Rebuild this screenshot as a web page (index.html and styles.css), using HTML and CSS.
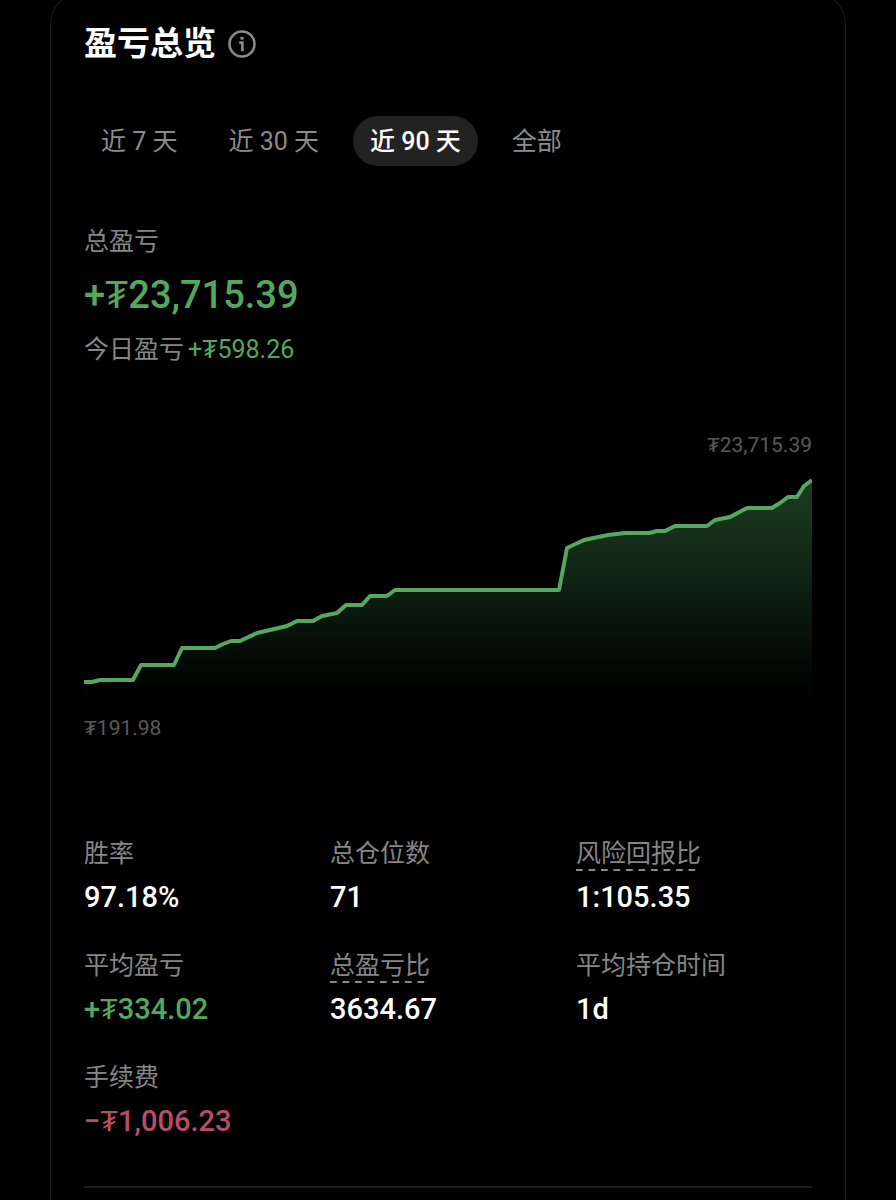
FILE: index.html
```html
<!DOCTYPE html>
<html lang="zh-CN">
<head>
  <meta charset="UTF-8">
  <meta name="viewport" content="width=device-width, initial-scale=1.0">
  <title>盈亏总览</title>
  <link rel="stylesheet" href="styles.css">
</head>
<body>
  <main class="card">
    <header class="card-header">
      <h1>盈亏总览</h1>
      <button class="info-btn" type="button" aria-label="说明">
        <svg viewBox="0 0 28 28" width="28" height="28" fill="none" stroke="currentColor">
          <circle cx="14" cy="14" r="12.5" stroke-width="2.6"/>
          <path d="M11.2 12.6h3.2v8.6" stroke-width="2.6"/>
          <circle cx="14" cy="8.2" r="1.7" fill="currentColor" stroke="none"/>
        </svg>
      </button>
    </header>

    <nav class="tabs">
      <button class="tab" type="button">近 7 天</button>
      <button class="tab" type="button">近 30 天</button>
      <button class="tab active" type="button">近 90 天</button>
      <button class="tab" type="button">全部</button>
    </nav>

    <section class="summary">
      <p class="label">总盈亏</p>
      <p class="total up">+₮23,715.39</p>
      <p class="today"><span class="label">今日盈亏</span> <span class="today-value up">+₮598.26</span></p>
    </section>

    <section class="chart">
      <p class="chart-label max">₮23,715.39</p>
      <svg class="chart-svg" viewBox="0 0 728 230" role="img" aria-label="近 90 天盈亏">
        <defs>
          <linearGradient id="area" x1="0" y1="10" x2="0" y2="228" gradientUnits="userSpaceOnUse">
            <stop offset="0" stop-color="#1d3d21"/>
            <stop offset="0.4" stop-color="#112615"/>
            <stop offset="0.7" stop-color="#07120a"/>
            <stop offset="1" stop-color="#000"/>
          </linearGradient>
        </defs>
        <path fill="url(#area)" d="M0 212H8L16 210H49L57 195H90L98 178H131L139 174L147 171H156L173 163L186 160L203 156L213 151H229L238 146L253 143L262 135H278L286 126H303L311 120H475L483 78L500 70L524 65L541 63H565L573 61H581L591 56H623L631 50L646 47L663 38H688L696 33L704 27H713L720 16L728 10V230H0Z"/>
        <path class="line" d="M0 212H8L16 210H49L57 195H90L98 178H131L139 174L147 171H156L173 163L186 160L203 156L213 151H229L238 146L253 143L262 135H278L286 126H303L311 120H475L483 78L500 70L524 65L541 63H565L573 61H581L591 56H623L631 50L646 47L663 38H688L696 33L704 27H713L720 16L728 10"/>
      </svg>
      <p class="chart-label">₮191.98</p>
    </section>

    <dl class="stats">
      <div class="stat">
        <dt class="label">胜率</dt>
        <dd>97.18%</dd>
      </div>
      <div class="stat">
        <dt class="label">总仓位数</dt>
        <dd>71</dd>
      </div>
      <div class="stat">
        <dt class="label hint">风险回报比</dt>
        <dd>1:105.35</dd>
      </div>
      <div class="stat">
        <dt class="label">平均盈亏</dt>
        <dd class="up">+₮334.02</dd>
      </div>
      <div class="stat">
        <dt class="label hint">总盈亏比</dt>
        <dd>3634.67</dd>
      </div>
      <div class="stat">
        <dt class="label">平均持仓时间</dt>
        <dd>1d</dd>
      </div>
      <div class="stat">
        <dt class="label">手续费</dt>
        <dd class="down">−₮1,006.23</dd>
      </div>
    </dl>

    <hr class="divider">
  </main>
</body>
</html>
```

FILE: styles.css
```css
* {
  margin: 0;
  padding: 0;
  box-sizing: border-box;
}

body {
  font-family: Roboto, "Noto Sans CJK SC", sans-serif;
  background: #000;
  color: #fff;
  padding: 0 50px;
}

.card {
  margin-top: -8px;
  padding: 26px 33px 11px;
  border: 1px solid #1c1c1c;
  border-bottom: 0;
  border-radius: 32px 32px 0 0;
}

.card-header {
  display: flex;
  align-items: center;
  gap: 12px;
}

h1 {
  font-size: 33px;
  font-weight: 700;
  line-height: 50px;
}

.info-btn {
  display: flex;
  background: none;
  border: 0;
  color: #8a8a8a;
}

.tabs {
  display: flex;
  gap: 17px;
  margin-top: 47px;
}

.tab {
  height: 50px;
  padding: 2px 17px 0;
  border: 0;
  border-radius: 25px;
  background: none;
  color: #8c8c8c;
  font-family: inherit;
  font-size: 25px;
  line-height: 48px;
}

.tab.active {
  background: #222;
  color: #fff;
  font-weight: 500;
}

.label {
  font-size: 25px;
  line-height: 34px;
  color: #868686;
}

.up {
  color: #54a85e;
}

.down {
  color: #b94d69;
}

.summary {
  margin-top: 59px;
}

.total {
  margin-top: 11px;
  font-size: 38px;
  font-weight: 500;
  line-height: 50px;
}

.today {
  display: flex;
  align-items: baseline;
  gap: 4px;
  margin-top: 13px;
}

.today-value {
  font-size: 25px;
  line-height: 34px;
}

.chart {
  margin-top: 63px;
}

.chart-label {
  font-size: 21px;
  line-height: 30px;
  color: #5a5a5a;
}

.chart-label.max {
  text-align: right;
}

.chart-svg {
  display: block;
  width: 100%;
  margin: 10px 0 13px;
}

.line {
  fill: none;
  stroke: #56a860;
  stroke-width: 4;
  stroke-linejoin: round;
}

.stats {
  display: grid;
  grid-template-columns: repeat(3, 1fr);
  gap: 33px 10px;
  margin-top: 94px;
}

.stat {
  display: flex;
  flex-direction: column;
  align-items: flex-start;
}

.hint {
  background: linear-gradient(to right, #8a8a8a 55%, transparent 55%) left bottom / 12px 2px;
  background-repeat: round no-repeat;
}

dd {
  margin-top: 7px;
  font-size: 29px;
  font-weight: 500;
  line-height: 38px;
}

.divider {
  margin-top: 46px;
  border: 0;
  border-top: 2px solid #1e1e1e;
}
```
